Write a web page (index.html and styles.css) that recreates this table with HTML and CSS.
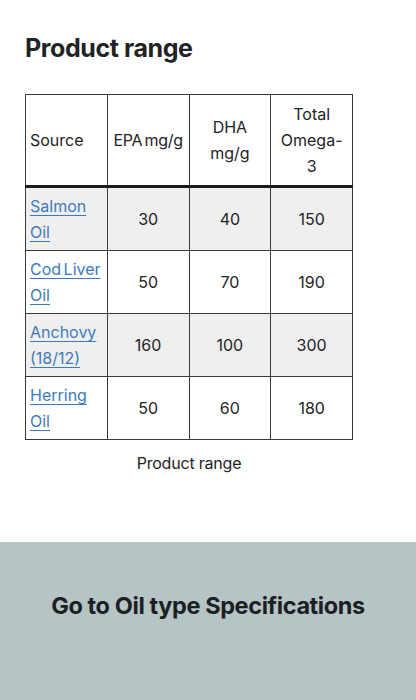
FILE: index.html
```html
<!DOCTYPE html>
<html lang="en">
<head>
  <meta charset="UTF-8" />
  <title>Product range</title>
  <link rel="stylesheet" href="styles.css">
</head>
<body>
  <main class="content">
    <h2>Product range</h2>

    <!-- omega-3 table -->
    <figure class="range">
      <table>
        <thead>
          <tr>
            <th class="src">Source</th>
            <th class="nowrap">EPA mg/g</th>
            <th>DHA mg/g</th>
            <th>Total Omega-3</th>
          </tr>
        </thead>
        <tbody>
          <tr>
            <td class="src"><a href="#">Salmon Oil</a></td>
            <td>30</td>
            <td>40</td>
            <td>150</td>
          </tr>
          <tr>
            <td class="src"><a href="#">Cod Liver Oil</a></td>
            <td>50</td>
            <td>70</td>
            <td>190</td>
          </tr>
          <tr>
            <td class="src"><a href="#">Anchovy (18/12)</a></td>
            <td>160</td>
            <td>100</td>
            <td>300</td>
          </tr>
          <tr>
            <td class="src"><a href="#">Herring Oil</a></td>
            <td>50</td>
            <td>60</td>
            <td>180</td>
          </tr>
        </tbody>
      </table>
      <figcaption>Product range</figcaption>
    </figure>
  </main>

  <!-- link banner -->
  <section class="specs">
    <a href="#">Go to Oil type Specifications</a>
  </section>
</body>
</html>
```

FILE: styles.css
```css
body {
  margin: 0;
  font-family: "Inter", "Liberation Sans", sans-serif;
  color: #1f2326;
  background: #fff;
}

.content {
  padding: 33px 25px 0;
}

h2 {
  margin: 0 0 31px;
  font-size: 25px;
  font-weight: 700;
  letter-spacing: -0.4px;
  line-height: 30px;
}

.range {
  margin: 0;
  width: 328px;
}

table {
  width: 100%;
  border-collapse: collapse;
  table-layout: fixed;
  font-size: 16px;
  line-height: 26px;
  word-spacing: -2px;
}

th, td {
  border: 1px solid #3a3a3a;
  padding: 5px 5px;
  text-align: center;
  font-weight: 400;
}

th {
  padding: 6px 5px;
}

th.nowrap {
  white-space: nowrap;
  padding: 6px 2px;
  letter-spacing: -0.3px;
}

thead th {
  border-bottom: 3px solid #1c1c1c;
}

th.src, td.src {
  text-align: left;
  padding-left: 4px;
}

tbody tr:nth-child(odd) {
  background: #efefef;
}

td a {
  color: #3b7bbd;
  text-decoration: underline;
  text-underline-offset: 3px;
}

figcaption {
  text-align: center;
  margin-top: 13px;
  font-size: 16px;
  letter-spacing: -0.2px;
}

.specs {
  margin-top: 69px;
  background: #b6c4c5;
  height: 158px;
  display: flex;
  justify-content: center;
  padding-top: 49px;
  box-sizing: border-box;
}

.specs a {
  color: #1b2024;
  text-decoration: none;
  font-size: 23.5px;
  font-weight: 700;
  letter-spacing: -0.4px;
  line-height: 30px;
}
```
